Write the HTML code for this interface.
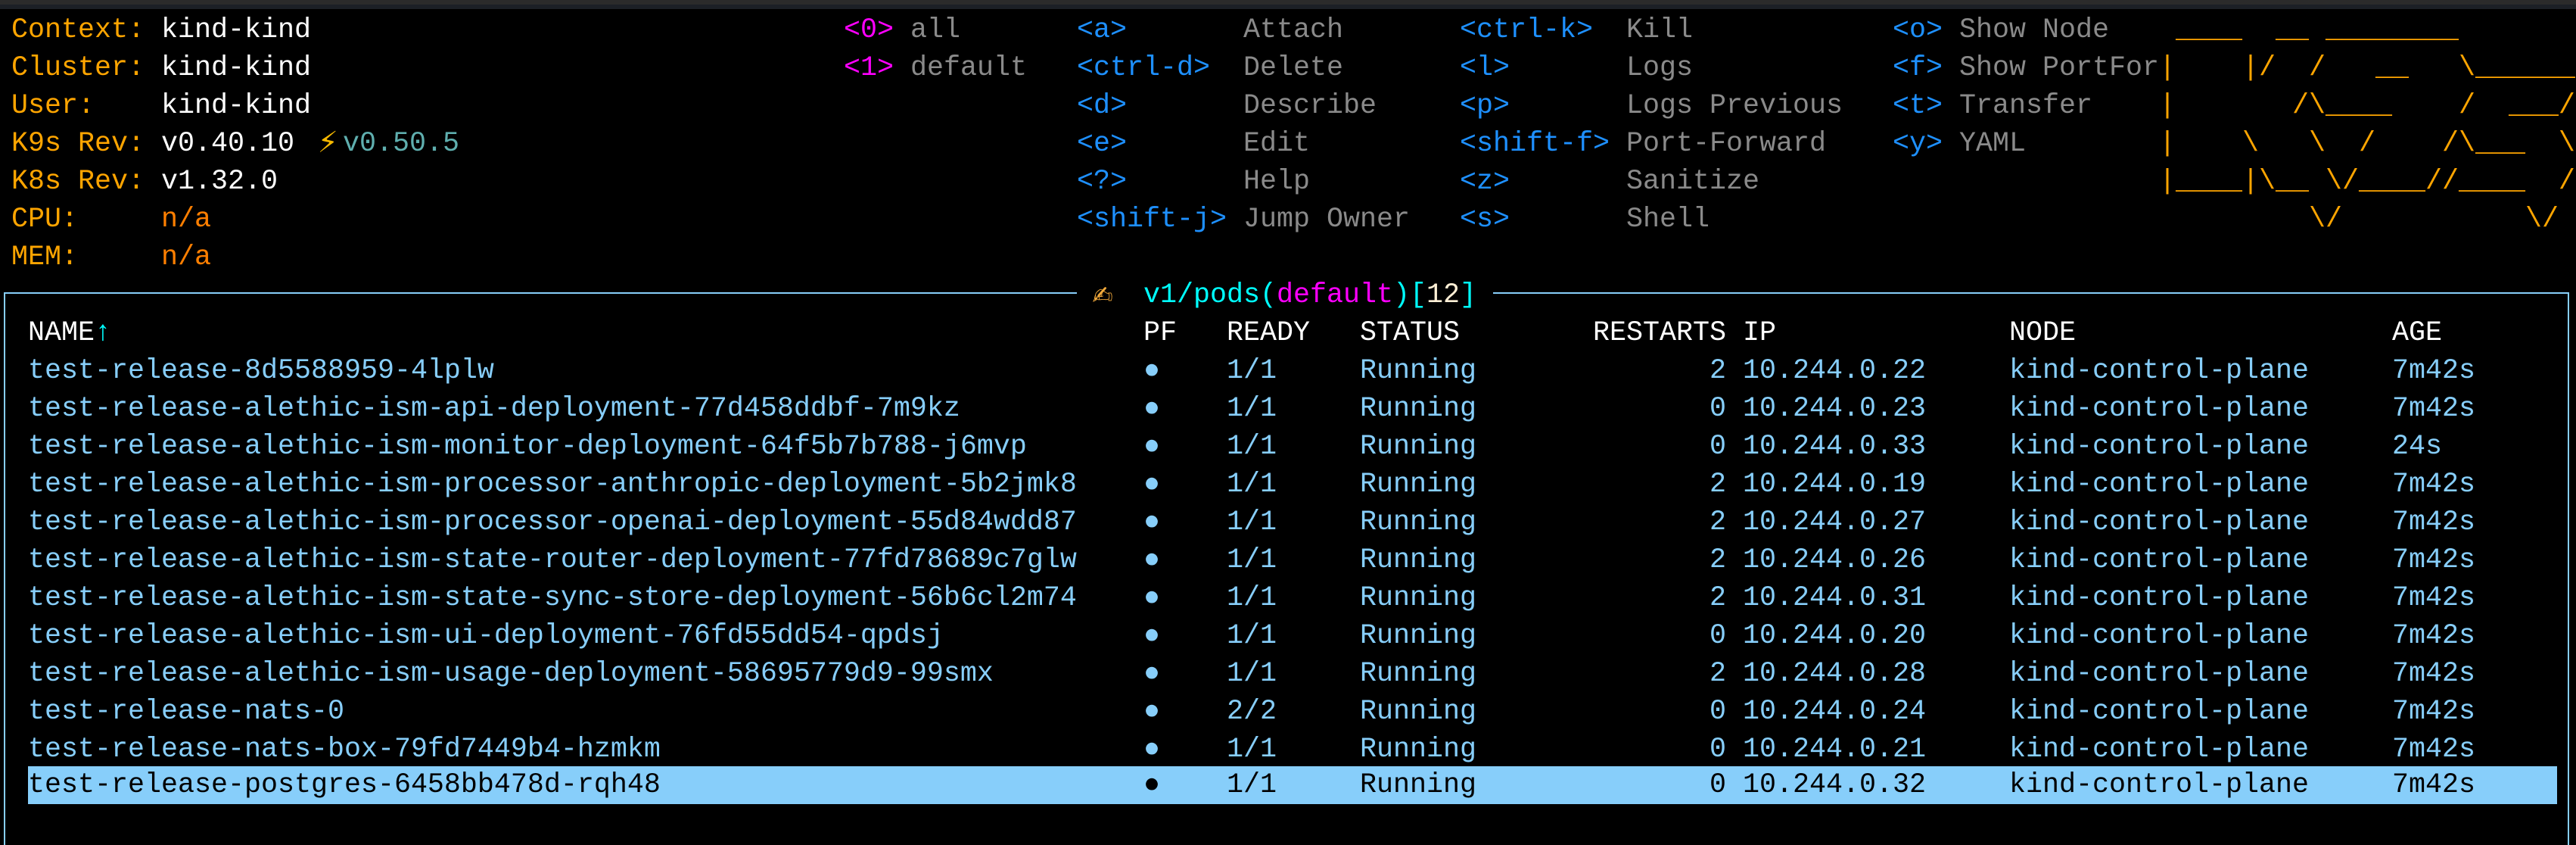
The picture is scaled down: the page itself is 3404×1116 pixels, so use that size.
<!DOCTYPE html>
<html><head><meta charset="utf-8"><style>
html,body{margin:0;padding:0;background:#000;width:3404px;height:1116px;overflow:hidden;position:relative}
.t{position:absolute;top:0;left:0;width:3404px;height:6px;background:#2b2b2b}
.t2{position:absolute;top:6px;left:0;width:3404px;height:6px;background:#1c2026}
.r{position:absolute;left:0;width:3404px;height:50px;margin-top:3px}
.r i{font-style:normal;position:absolute;top:0;line-height:50px;white-space:pre;font-family:"Liberation Mono","DejaVu Sans Mono",monospace;font-size:36.67px}
.o{color:#ffa500}.w{color:#fff}.n{color:#ff7f00}.tl{color:#5fafaf}.m{color:#ff00ff}.g{color:#8a8a8a}.b{color:#1e90ff}.s{color:#87cefa}.cy{color:#00ffff}.pw{color:#ffefd5}
.sel{position:absolute;left:37px;width:3342px;top:1012px;height:50px;background:#87cefa}
.hl{position:absolute;height:2px;background:#87cefa;top:386px}
.vl{position:absolute;width:2px;background:#87cefa;top:386px;height:730px}
</style></head><body>
<div class="t"></div><div class="t2"></div>

<div class="r" style="top:12px"><i class="o" style="left:15px">Context:</i><i class="w" style="left:213px">kind-kind</i><i class="m" style="left:1115px">&lt;0&gt;</i><i class="g" style="left:1203px">all</i><i class="b" style="left:1423px">&lt;a&gt;</i><i class="g" style="left:1643px">Attach</i><i class="b" style="left:1929px">&lt;ctrl-k&gt;</i><i class="g" style="left:2149px">Kill</i><i class="b" style="left:2501px">&lt;o&gt;</i><i class="g" style="left:2589px">Show Node</i><i class="o" style="left:2853px"> ____  __ ________       </i></div>
<div class="r" style="top:62px"><i class="o" style="left:15px">Cluster:</i><i class="w" style="left:213px">kind-kind</i><i class="m" style="left:1115px">&lt;1&gt;</i><i class="g" style="left:1203px">default</i><i class="b" style="left:1423px">&lt;ctrl-d&gt;</i><i class="g" style="left:1643px">Delete</i><i class="b" style="left:1929px">&lt;l&gt;</i><i class="g" style="left:2149px">Logs</i><i class="b" style="left:2501px">&lt;f&gt;</i><i class="g" style="left:2589px">Show PortFor</i><i class="o" style="left:2853px">|    |/  /   __   \______</i></div>
<div class="r" style="top:112px"><i class="o" style="left:15px">User:</i><i class="w" style="left:213px">kind-kind</i><i class="b" style="left:1423px">&lt;d&gt;</i><i class="g" style="left:1643px">Describe</i><i class="b" style="left:1929px">&lt;p&gt;</i><i class="g" style="left:2149px">Logs Previous</i><i class="b" style="left:2501px">&lt;t&gt;</i><i class="g" style="left:2589px">Transfer</i><i class="o" style="left:2853px">|       /\____    /  ___/</i></div>
<div class="r" style="top:162px"><i class="o" style="left:15px">K9s Rev:</i><i class="w" style="left:213px">v0.40.10</i><i style="left:420px;color:#f5b800;font-size:44px">⚡</i><i class="tl" style="left:453px">v0.50.5</i><i class="b" style="left:1423px">&lt;e&gt;</i><i class="g" style="left:1643px">Edit</i><i class="b" style="left:1929px">&lt;shift-f&gt;</i><i class="g" style="left:2149px">Port-Forward</i><i class="b" style="left:2501px">&lt;y&gt;</i><i class="g" style="left:2589px">YAML</i><i class="o" style="left:2853px">|    \   \  /    /\___  \</i></div>
<div class="r" style="top:212px"><i class="o" style="left:15px">K8s Rev:</i><i class="w" style="left:213px">v1.32.0</i><i class="b" style="left:1423px">&lt;?&gt;</i><i class="g" style="left:1643px">Help</i><i class="b" style="left:1929px">&lt;z&gt;</i><i class="g" style="left:2149px">Sanitize</i><i class="o" style="left:2853px">|____|\__ \/____//____  /</i></div>
<div class="r" style="top:262px"><i class="o" style="left:15px">CPU:</i><i class="n" style="left:213px">n/a</i><i class="b" style="left:1423px">&lt;shift-j&gt;</i><i class="g" style="left:1643px">Jump Owner</i><i class="b" style="left:1929px">&lt;s&gt;</i><i class="g" style="left:2149px">Shell</i><i class="o" style="left:2853px">         \/           \/ </i></div>
<div class="r" style="top:312px"><i class="o" style="left:15px">MEM:</i><i class="n" style="left:213px">n/a</i></div>

<div class="hl" style="left:6px;width:1417px"></div>
<div class="hl" style="left:1973px;width:1422px"></div>
<div class="vl" style="left:5px"></div>
<div class="vl" style="left:3393px"></div>
<div class="r" style="top:362px"><i style="left:1443px;color:#f2a93b;font-size:46px">✍</i><i class="cy" style="left:1511px">v1/pods(<span class="m">default</span>)[<span class="pw">12</span>]</i></div>

<div class="r" style="top:412px"><i class="w" style="left:37px">NAME<span class="cy">↑</span></i><i class="w" style="left:1511px">PF</i><i class="w" style="left:1621px">READY</i><i class="w" style="left:1797px">STATUS</i><i class="w" style="left:2105px">RESTARTS</i><i class="w" style="left:2303px">IP</i><i class="w" style="left:2655px">NODE</i><i class="w" style="left:3161px">AGE</i></div>

<div class="r s" style="top:462px"><i style="left:37px">test-release-8d5588959-4lplw</i><i style="left:1511px">●</i><i style="left:1621px">1/1</i><i style="left:1797px">Running</i><i style="left:2259px">2</i><i style="left:2303px">10.244.0.22</i><i style="left:2655px">kind-control-plane</i><i style="left:3161px">7m42s</i></div>
<div class="r s" style="top:512px"><i style="left:37px">test-release-alethic-ism-api-deployment-77d458ddbf-7m9kz</i><i style="left:1511px">●</i><i style="left:1621px">1/1</i><i style="left:1797px">Running</i><i style="left:2259px">0</i><i style="left:2303px">10.244.0.23</i><i style="left:2655px">kind-control-plane</i><i style="left:3161px">7m42s</i></div>
<div class="r s" style="top:562px"><i style="left:37px">test-release-alethic-ism-monitor-deployment-64f5b7b788-j6mvp</i><i style="left:1511px">●</i><i style="left:1621px">1/1</i><i style="left:1797px">Running</i><i style="left:2259px">0</i><i style="left:2303px">10.244.0.33</i><i style="left:2655px">kind-control-plane</i><i style="left:3161px">24s</i></div>
<div class="r s" style="top:612px"><i style="left:37px">test-release-alethic-ism-processor-anthropic-deployment-5b2jmk8</i><i style="left:1511px">●</i><i style="left:1621px">1/1</i><i style="left:1797px">Running</i><i style="left:2259px">2</i><i style="left:2303px">10.244.0.19</i><i style="left:2655px">kind-control-plane</i><i style="left:3161px">7m42s</i></div>
<div class="r s" style="top:662px"><i style="left:37px">test-release-alethic-ism-processor-openai-deployment-55d84wdd87</i><i style="left:1511px">●</i><i style="left:1621px">1/1</i><i style="left:1797px">Running</i><i style="left:2259px">2</i><i style="left:2303px">10.244.0.27</i><i style="left:2655px">kind-control-plane</i><i style="left:3161px">7m42s</i></div>
<div class="r s" style="top:712px"><i style="left:37px">test-release-alethic-ism-state-router-deployment-77fd78689c7glw</i><i style="left:1511px">●</i><i style="left:1621px">1/1</i><i style="left:1797px">Running</i><i style="left:2259px">2</i><i style="left:2303px">10.244.0.26</i><i style="left:2655px">kind-control-plane</i><i style="left:3161px">7m42s</i></div>
<div class="r s" style="top:762px"><i style="left:37px">test-release-alethic-ism-state-sync-store-deployment-56b6cl2m74</i><i style="left:1511px">●</i><i style="left:1621px">1/1</i><i style="left:1797px">Running</i><i style="left:2259px">2</i><i style="left:2303px">10.244.0.31</i><i style="left:2655px">kind-control-plane</i><i style="left:3161px">7m42s</i></div>
<div class="r s" style="top:812px"><i style="left:37px">test-release-alethic-ism-ui-deployment-76fd55dd54-qpdsj</i><i style="left:1511px">●</i><i style="left:1621px">1/1</i><i style="left:1797px">Running</i><i style="left:2259px">0</i><i style="left:2303px">10.244.0.20</i><i style="left:2655px">kind-control-plane</i><i style="left:3161px">7m42s</i></div>
<div class="r s" style="top:862px"><i style="left:37px">test-release-alethic-ism-usage-deployment-58695779d9-99smx</i><i style="left:1511px">●</i><i style="left:1621px">1/1</i><i style="left:1797px">Running</i><i style="left:2259px">2</i><i style="left:2303px">10.244.0.28</i><i style="left:2655px">kind-control-plane</i><i style="left:3161px">7m42s</i></div>
<div class="r s" style="top:912px"><i style="left:37px">test-release-nats-0</i><i style="left:1511px">●</i><i style="left:1621px">2/2</i><i style="left:1797px">Running</i><i style="left:2259px">0</i><i style="left:2303px">10.244.0.24</i><i style="left:2655px">kind-control-plane</i><i style="left:3161px">7m42s</i></div>
<div class="r s" style="top:962px"><i style="left:37px">test-release-nats-box-79fd7449b4-hzmkm</i><i style="left:1511px">●</i><i style="left:1621px">1/1</i><i style="left:1797px">Running</i><i style="left:2259px">0</i><i style="left:2303px">10.244.0.21</i><i style="left:2655px">kind-control-plane</i><i style="left:3161px">7m42s</i></div>
<div class="sel"></div>
<div class="r" style="top:1009px;color:#000"><i style="left:37px">test-release-postgres-6458bb478d-rqh48</i><i style="left:1511px">●</i><i style="left:1621px">1/1</i><i style="left:1797px">Running</i><i style="left:2259px">0</i><i style="left:2303px">10.244.0.32</i><i style="left:2655px">kind-control-plane</i><i style="left:3161px">7m42s</i></div>
</body></html>
